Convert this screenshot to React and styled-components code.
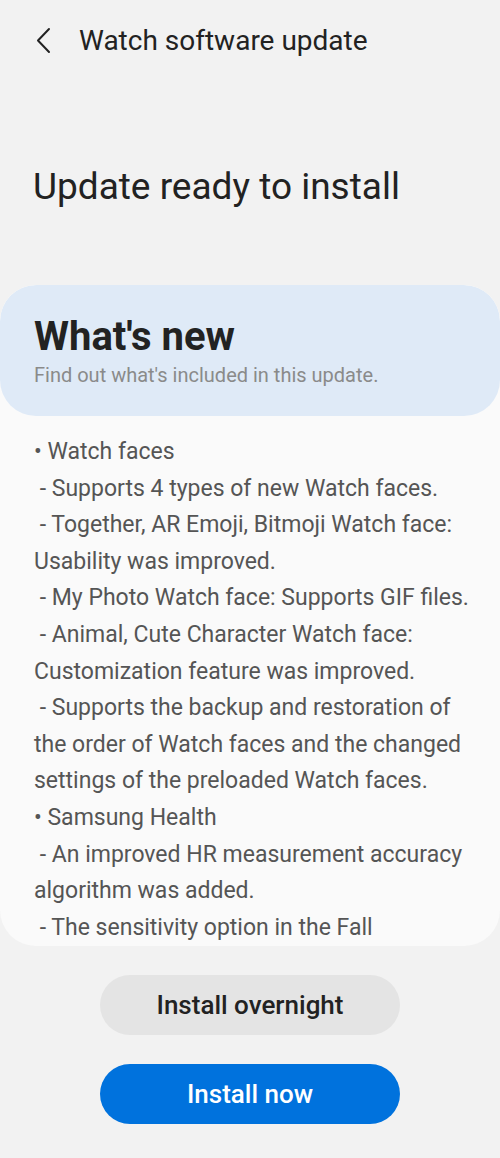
import styled, { createGlobalStyle } from 'styled-components';

const GlobalStyle = createGlobalStyle`
  html, body {
    margin: 0;
    padding: 0;
    background: #f2f2f2;
  }
  body {
    font-family: Roboto, "Noto Sans", sans-serif;
    color: #222;
  }
`;

const Screen = styled.div`
  width: 500px;
  height: 1158px;
  display: flex;
  flex-direction: column;
  background: #f2f2f2;
  overflow: hidden;
`;

const TopBar = styled.div`
  height: 80px;
  display: flex;
  align-items: center;
  padding-left: 32px;
  gap: 19px;
`;

const BackButton = styled.button`
  border: 0;
  background: none;
  padding: 0;
  width: 28px;
  height: 28px;
  display: flex;
  align-items: center;
  justify-content: center;
  svg {
    width: 28px;
    height: 28px;
  }
`;

const TopTitle = styled.h1`
  margin: 0;
  font-size: 28px;
  font-weight: 400;
  color: #222;
`;

const Heading = styled.h2`
  box-sizing: border-box;
  margin: 0;
  height: 205px;
  display: flex;
  align-items: center;
  padding: 8px 0 0 33px;
  font-size: 37px;
  font-weight: 400;
  color: #222;
`;

const Card = styled.section`
  height: 661px;
  background: #fafafa;
  border-radius: 36px;
  overflow: hidden;
  display: flex;
  flex-direction: column;
`;

const CardHeader = styled.div`
  background: #dfeaf7;
  border-radius: 36px;
  height: 131px;
  padding: 0 34px;
  display: flex;
  flex-direction: column;
  justify-content: center;
  flex-shrink: 0;
`;

const CardTitle = styled.div`
  font-size: 40px;
  font-weight: 700;
  color: #222;
  line-height: 48px;
`;

const CardSubtitle = styled.div`
  font-size: 20px;
  color: #8a8a8a;
  line-height: 28px;
`;

const Notes = styled.div`
  padding: 18px 0 0 34px;
  font-size: 23px;
  line-height: 36.6px;
  color: #555;
  white-space: pre;
`;

const Actions = styled.div`
  display: flex;
  flex-direction: column;
  align-items: center;
  gap: 29px;
  padding-top: 29px;
`;

const PillButton = styled.button`
  width: 300px;
  height: 60px;
  border: 0;
  border-radius: 30px;
  font-family: inherit;
  font-size: 26px;
  font-weight: 500;
  background: ${(p) => (p.$primary ? '#0072dd' : '#e4e4e4')};
  color: ${(p) => (p.$primary ? '#fff' : '#222')};
`;

const notes = [
  '• Watch faces',
  ' - Supports 4 types of new Watch faces.',
  ' - Together, AR Emoji, Bitmoji Watch face:',
  'Usability was improved.',
  ' - My Photo Watch face: Supports GIF files.',
  ' - Animal, Cute Character Watch face:',
  'Customization feature was improved.',
  ' - Supports the backup and restoration of',
  'the order of Watch faces and the changed',
  'settings of the preloaded Watch faces.',
  '• Samsung Health',
  ' - An improved HR measurement accuracy',
  'algorithm was added.',
  ' - The sensitivity option in the Fall',
];

export default function App() {
  return (
    <Screen>
      <GlobalStyle />
      <TopBar>
        <BackButton aria-label='Back'>
          <svg viewBox='0 0 28 28'>
            <path d='M17 3L6 14.5L17 26' fill='none' stroke='#222' strokeWidth='2' strokeLinecap='round' strokeLinejoin='round' />
          </svg>
        </BackButton>
        <TopTitle>Watch software update</TopTitle>
      </TopBar>
      <Heading>Update ready to install</Heading>
      <Card>
        <CardHeader>
          <CardTitle>What's new</CardTitle>
          <CardSubtitle>Find out what's included in this update.</CardSubtitle>
        </CardHeader>
        <Notes>
          {notes.map((line, i) => (
            <div key={i}>{line}</div>
          ))}
        </Notes>
      </Card>
      <Actions>
        <PillButton>Install overnight</PillButton>
        <PillButton $primary>Install now</PillButton>
      </Actions>
    </Screen>
  );
}
